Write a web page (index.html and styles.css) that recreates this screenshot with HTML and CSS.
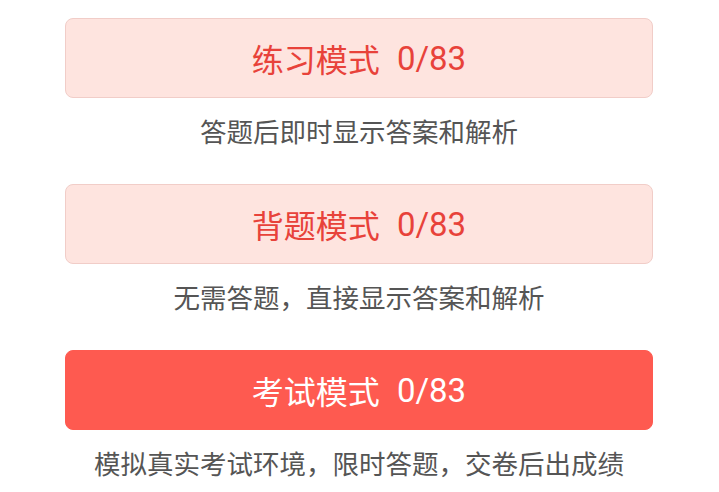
FILE: index.html
```html
<!DOCTYPE html>
<html>
  <head>
    <meta charset="UTF-8">
    <title>答题模式</title>
    <link rel="stylesheet" href="styles.css">
  </head>
  <body>
    <div class="mode-list">
      <div class="mode">
        <button class="mode-btn">练习模式<span class="count">0/83</span></button>
        <p class="mode-desc">答题后即时显示答案和解析</p>
      </div>
      <div class="mode">
        <button class="mode-btn">背题模式<span class="count">0/83</span></button>
        <p class="mode-desc">无需答题，直接显示答案和解析</p>
      </div>
      <div class="mode">
        <button class="mode-btn primary">考试模式<span class="count">0/83</span></button>
        <p class="mode-desc">模拟真实考试环境，限时答题，交卷后出成绩</p>
      </div>
    </div>
  </body>
</html>
```
FILE: styles.css
```css
/* Page */
body {
  margin: 0;
  background-color: #ffffff;
  font-family: Roboto, "Noto Sans CJK SC", sans-serif;
}

.mode-list {
  display: flex;
  flex-direction: column;
  padding: 18px 66px 0 65px;
}

/* Mode button */
.mode-btn {
  display: flex;
  align-items: center;
  justify-content: center;
  width: 100%;
  height: 80px;
  border: 1px solid #f1cdc8;
  border-radius: 8px;
  background-color: #fee4df;
  color: #e8423a;
  font-family: Roboto, "Noto Sans CJK SC", sans-serif;
  font-size: 32px;
  padding: 0;
}

.mode-btn .count {
  margin-left: 17px;
  font-size: 33px;
}

.mode-btn.primary {
  background-color: #fe5a50;
  border-color: #fe5a50;
  color: #ffffff;
}

/* Description under each button */
.mode-desc {
  margin: 22px 0 38px;
  text-align: center;
  font-size: 26.5px;
  line-height: 26px;
  color: #555555;
}
```
